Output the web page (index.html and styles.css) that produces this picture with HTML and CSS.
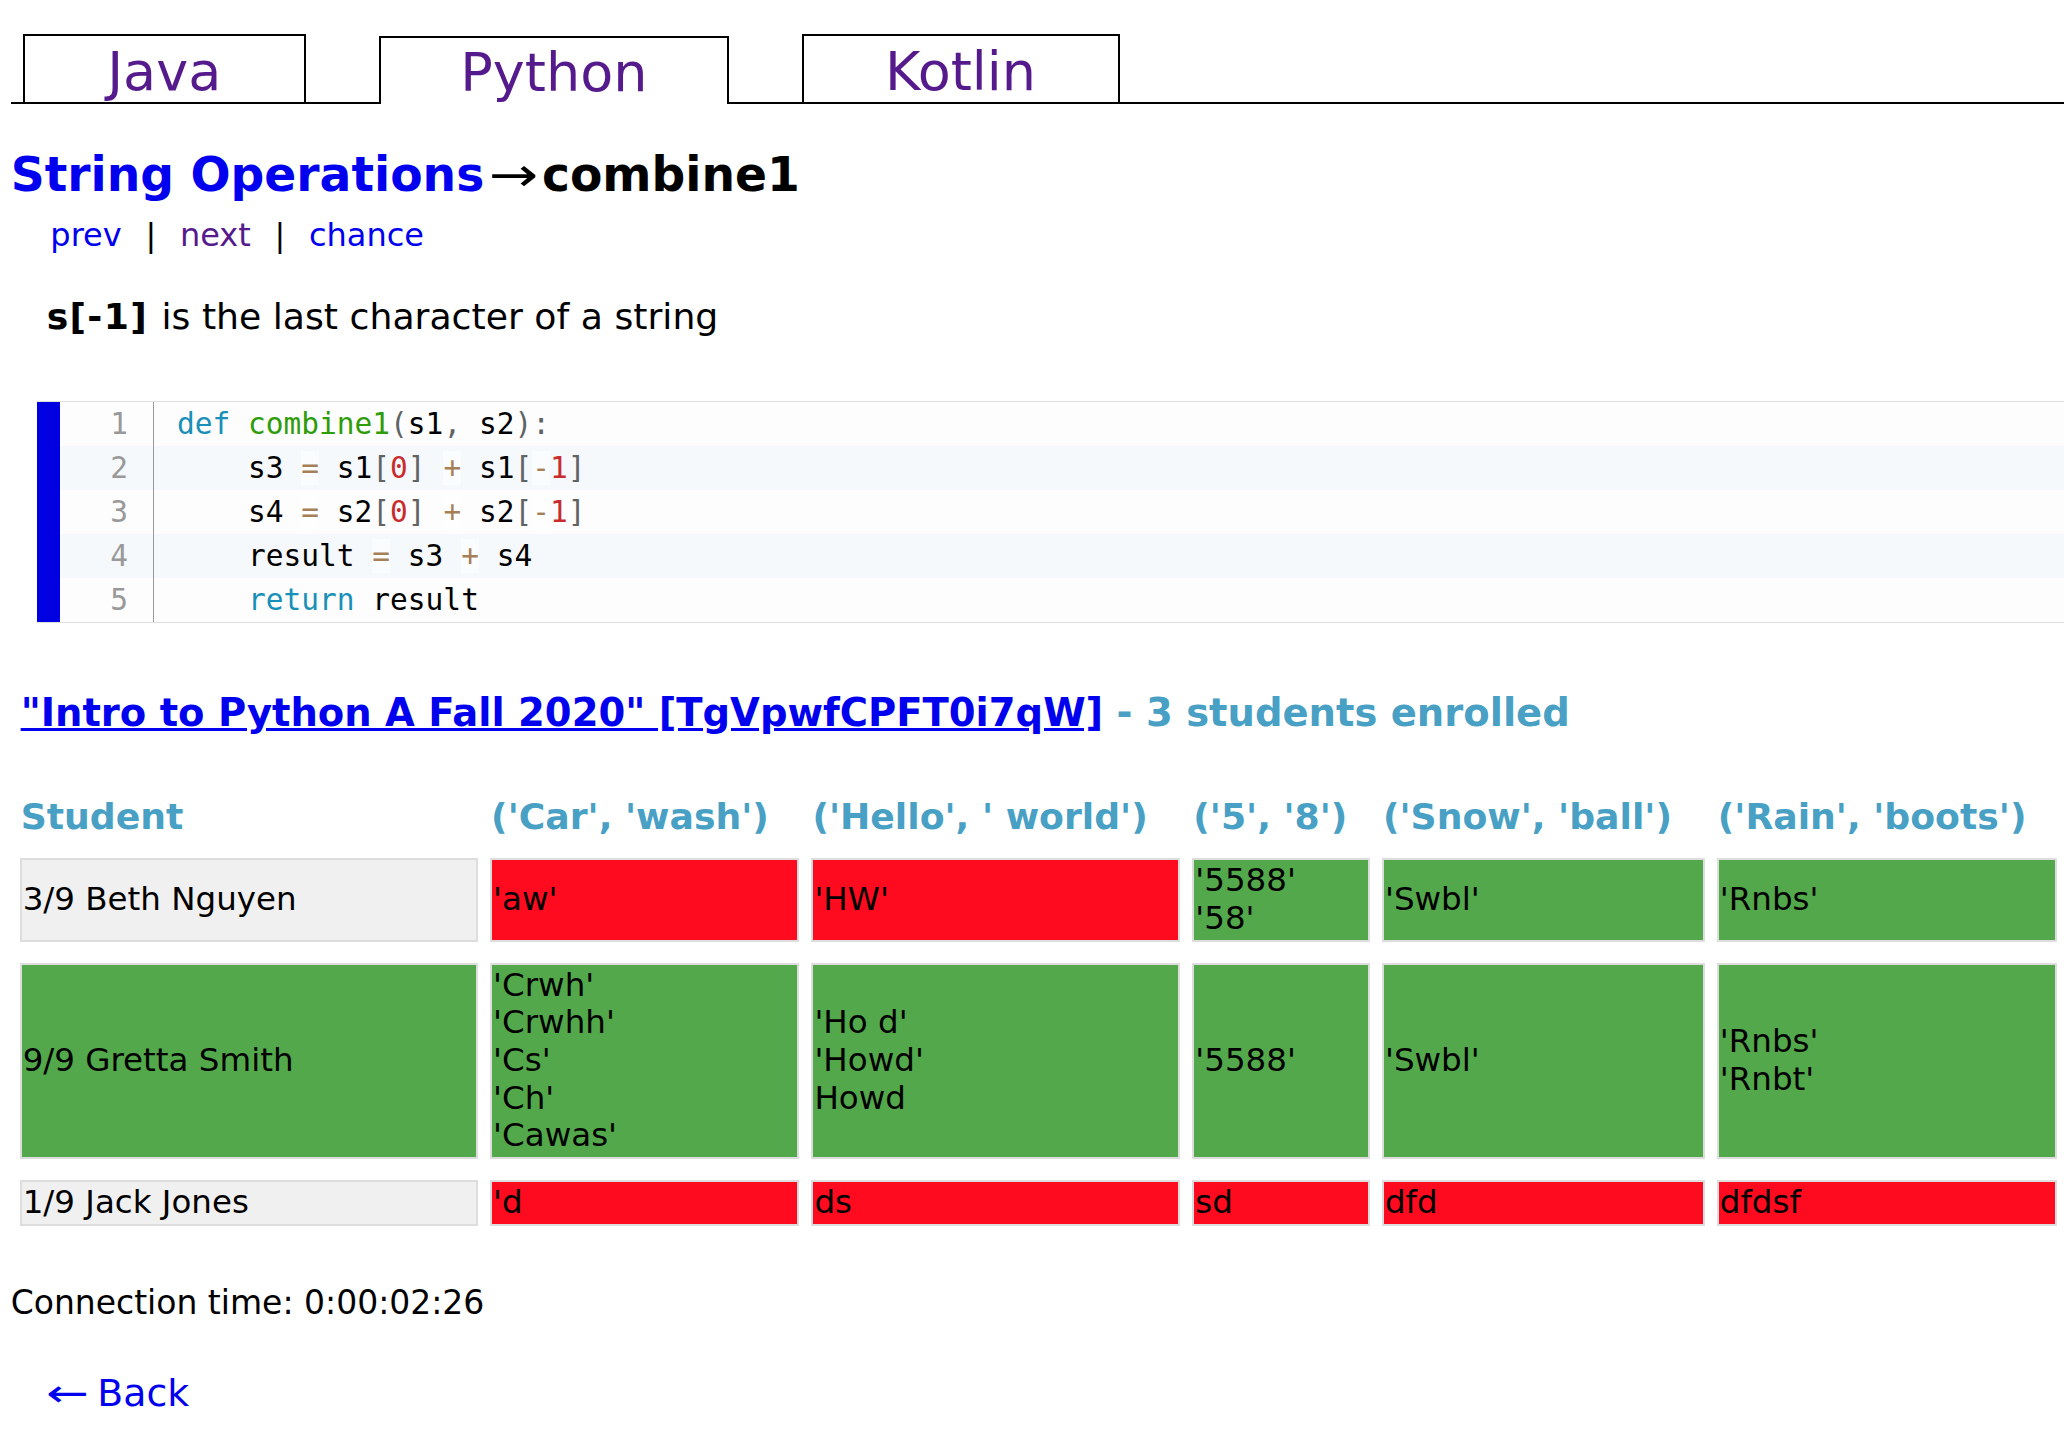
FILE: index.html
```html
<!DOCTYPE html>
<html lang="en">
<head>
<meta charset="utf-8">
<title>String Operations → combine1</title>
<link rel="stylesheet" href="styles.css">
</head>
<body>
<nav class="tabs">
  <a class="tab tab-java" href="#">Java</a>
  <a class="tab active" href="#">Python</a>
  <a class="tab tab-kotlin" href="#">Kotlin</a>
</nav>

<h1 class="title"><a class="crumb" href="#">String Operations</a><span class="arrow">→</span>combine1</h1>

<div class="pager"><a href="#">prev</a>|<a class="visited" href="#">next</a>|<a href="#">chance</a></div>

<p class="hint"><b>s[-1]</b> is the last character of a string</p>

<div class="code">
  <div class="gutter"><span>1</span><span>2</span><span>3</span><span>4</span><span>5</span></div>
  <pre class="src"><span class="line"><span class="kw">def</span> <span class="fn">combine1</span><span class="pn">(</span>s1<span class="pn">,</span> s2<span class="pn">)</span><span class="pn">:</span></span><span class="line">    s3 <span class="op">=</span> s1<span class="pn">[</span><span class="num">0</span><span class="pn">]</span> <span class="op">+</span> s1<span class="pn">[</span><span class="op">-</span><span class="num">1</span><span class="pn">]</span></span><span class="line">    s4 <span class="op">=</span> s2<span class="pn">[</span><span class="num">0</span><span class="pn">]</span> <span class="op">+</span> s2<span class="pn">[</span><span class="op">-</span><span class="num">1</span><span class="pn">]</span></span><span class="line">    result <span class="op">=</span> s3 <span class="op">+</span> s4</span><span class="line">    <span class="kw">return</span> result</span></pre>
</div>

<h2 class="course"><a href="#">"Intro to Python A Fall 2020" [TgVpwfCPFT0i7qW]</a> - 3 students enrolled</h2>

<table class="results">
  <thead>
    <tr>
      <th class="c-student">Student</th>
      <th class="c-1">('Car', 'wash')</th>
      <th class="c-2">('Hello', ' world')</th>
      <th class="c-3">('5', '8')</th>
      <th class="c-4">('Snow', 'ball')</th>
      <th class="c-5">('Rain', 'boots')</th>
    </tr>
  </thead>
  <tbody>
    <tr>
      <td class="partial">3/9 Beth Nguyen</td>
      <td class="bad">'aw'</td>
      <td class="bad">'HW'</td>
      <td class="good">'5588'<br>'58'</td>
      <td class="good">'Swbl'</td>
      <td class="good">'Rnbs'</td>
    </tr>
    <tr>
      <td class="good">9/9 Gretta Smith</td>
      <td class="good">'Crwh'<br>'Crwhh'<br>'Cs'<br>'Ch'<br>'Cawas'</td>
      <td class="good">'Ho d'<br>'Howd'<br>Howd</td>
      <td class="good">'5588'</td>
      <td class="good">'Swbl'</td>
      <td class="good">'Rnbs'<br>'Rnbt'</td>
    </tr>
    <tr>
      <td class="partial">1/9 Jack Jones</td>
      <td class="bad">'d</td>
      <td class="bad">ds</td>
      <td class="bad">sd</td>
      <td class="bad">dfd</td>
      <td class="bad">dfdsf</td>
    </tr>
  </tbody>
</table>

<p class="conn">Connection time: 0:00:02:26</p>

<a class="back" href="#"><span class="back-arrow">←</span>Back</a>
</body>
</html>
```

FILE: styles.css
```css
html, body {
  overflow-x: hidden;
}

body {
  margin: 0;
  padding: 0 10.67px 20px;
  font-family: "DejaVu Sans", Verdana, sans-serif;
  font-size: 32px;
  color: #000;
  background: #fff;
}

a {
  color: #0000ee;
}

/* ---------- language tabs ---------- */
.tabs {
  display: flex;
  align-items: flex-end;
  gap: 73px;
  margin: 34px -10.67px 0 0;
  padding-left: 12px;
  border-bottom: 2px solid #000;
}

.tab {
  box-sizing: border-box;
  height: 68px;
  padding: 9px 79.5px 0;
  border: 2px solid #000;
  border-bottom: none;
  font-size: 54px;
  line-height: 54px;
  color: #551a8b;
  text-decoration: none;
  background: #fff;
}

.tab-java {
  padding: 9px 82.5px 0;
}

.tab-kotlin {
  padding: 9px 82px 0 81px;
}

.tab.active {
  height: 68px;
  padding-top: 8px;
  margin-bottom: -2px;
}

/* ---------- title ---------- */
.title {
  margin: 42.5px 0 0;
  font-size: 47.2px;
  font-weight: bold;
  line-height: normal;
}

.crumb {
  text-decoration: none;
}

.arrow {
  display: inline-block;
  font-weight: normal;
  margin: 0 13.5px 0 4.6px;
  transform: scaleX(1.25);
  transform-origin: left center;
}

.pager {
  margin-top: 14.5px;
  padding-left: 16px;
  font-size: 32px;
}

.pager a {
  margin: 0 23.7px;
  text-decoration: none;
}

.pager a.visited {
  color: #551a8b;
}

.hint {
  margin: 40.5px 0 0 36px;
  font-size: 36.2px;
}

.hint b {
  letter-spacing: 1.3px;
  margin-right: 2px;
}

/* ---------- code block ---------- */
.code {
  display: flex;
  margin: 64px -10.67px 0 27.6px;
  border-left: 22px solid #0000e0;
  box-shadow: -1px 0 0 0 #0000e0, 0 0 0 1px #dfdfdf;
  background-color: #fdfdfd;
  background-image: linear-gradient(transparent 50%, rgba(69, 142, 209, 0.04) 50%);
  background-size: 100% 88px;
  font-family: "DejaVu Sans Mono", Menlo, monospace;
  font-size: 29.5px;
  line-height: 44px;
}

.gutter {
  display: flex;
  flex-direction: column;
  width: 67.7px;
  padding-right: 25px;
  border-right: 1px solid #999;
  text-align: right;
  color: #999;
}

.src {
  margin: 0;
  padding-left: 23px;
  font: inherit;
  line-height: 44px;
  color: #000;
}

.line {
  display: block;
}

.kw  { color: #1990b8; }
.fn  { color: #2f9c0a; }
.pn  { color: #5f6364; }
.num { color: #c92c2c; }
.op  {
  color: #a67f59;
  background: rgba(255, 255, 255, 0.5);
}

/* ---------- course ---------- */
.course {
  margin: 68px 0 0 10px;
  font-size: 38.5px;
  font-weight: bold;
  line-height: normal;
  color: #48a0c4;
}

/* ---------- results table ---------- */
.results {
  width: 2061.5px;
  margin: 41.6px 0 0 -3px;
  border-collapse: separate;
  border-spacing: 12px 21px;
}

.results th {
  box-sizing: border-box;
  padding: 1px;
  text-align: left;
  font-size: 36.2px;
  font-weight: bold;
  line-height: 38px;
  color: #48a0c4;
  white-space: nowrap;
}

.c-student { width: 458px; }
.c-1 { width: 309px; }
.c-2 { width: 368.5px; }
.c-3 { width: 177.5px; }
.c-4 { width: 322.5px; }
.c-5 { width: 340px; }

.results td {
  padding: 2px 1px;
  border: 2px solid #dddddd;
  font-size: 32.5px;
  line-height: 37.7px;
  white-space: nowrap;
}

.partial { background: #f0f0f0; }
.bad     { background: #fe0b1f; }
.good    { background: #52a84a; }

/* ---------- footer ---------- */
.conn {
  margin: 36.7px 0 0;
  font-size: 33px;
}

.back {
  display: inline-block;
  margin: 48.3px 0 0 35px;
  font-size: 37.8px;
  text-decoration: none;
}

.back-arrow {
  display: inline-block;
  margin-right: 20px;
  transform: scaleX(1.35);
  transform-origin: left center;
}
```
